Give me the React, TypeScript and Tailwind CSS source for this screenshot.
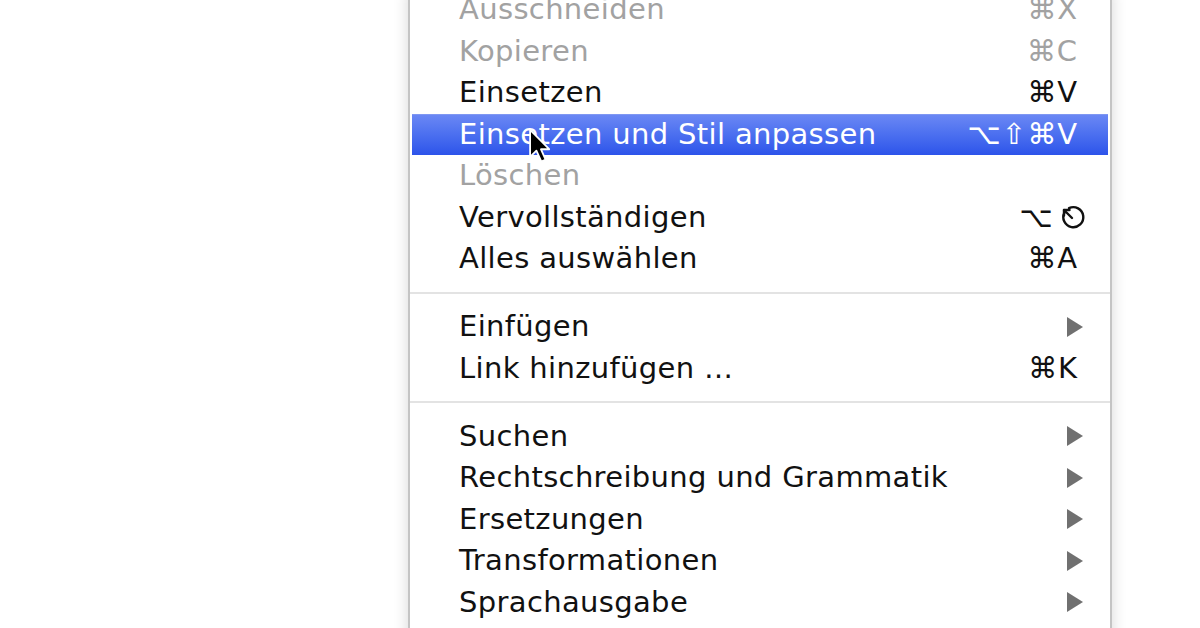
import React from 'react';

type Item = {
  label: string;
  keys?: string;
  esc?: boolean;
  disabled?: boolean;
  submenu?: boolean;
  active?: boolean;
};

// menu sections, split by separators
const sections: Item[][] = [
  [
    { label: 'Ausschneiden', keys: '⌘X', disabled: true },
    { label: 'Kopieren', keys: '⌘C', disabled: true },
    { label: 'Einsetzen', keys: '⌘V' },
    { label: 'Einsetzen und Stil anpassen', keys: '⌥⇧⌘V', active: true },
    { label: 'Löschen', disabled: true },
    { label: 'Vervollständigen', keys: '⌥', esc: true },
    { label: 'Alles auswählen', keys: '⌘A' },
  ],
  [
    { label: 'Einfügen', submenu: true },
    { label: 'Link hinzufügen …', keys: '⌘K' },
  ],
  [
    { label: 'Suchen', submenu: true },
    { label: 'Rechtschreibung und Grammatik', submenu: true },
    { label: 'Ersetzungen', submenu: true },
    { label: 'Transformationen', submenu: true },
    { label: 'Sprachausgabe', submenu: true },
  ],
];

const EscGlyph = () => (
  <svg width="28" height="28" viewBox="0 0 28 28" fill="none" stroke="currentColor" strokeWidth="2.4" strokeLinecap="round">
    <path d="M6.5 9.5 A10 10 0 1 0 11 5.2" />
    <path d="M14 15 L6 7" />
    <path d="M6 7 L6 12.5 M6 7 L11.5 7" />
  </svg>
);

const Arrow = () => (
  <svg width="16" height="20" viewBox="0 0 16 20">
    <polygon points="0,0 16,10 0,20" fill="#707070" />
  </svg>
);

const Cursor = () => (
  <svg width="24" height="36" viewBox="0 0 13 20" className="absolute left-[528px] top-[128px]">
    <path d="M1 1 L1 16 L4.5 12.6 L7.2 18.6 L9.6 17.6 L7 11.8 L11.6 11.8 Z" fill="#000" stroke="#fff" strokeWidth="1" strokeLinejoin="round" />
  </svg>
);

const Row = ({ item }: { item: Item }) => {
  const color = item.active ? 'text-white' : item.disabled ? 'text-[#a2a2a2]' : 'text-[#111111]';
  return (
    <div
      className={`h-[41.5px] flex items-center justify-between pl-[47px] pr-[30px] mx-[2px] ${color} ${
        item.active ? 'bg-linear-to-b from-[#6a87f4] to-[#2d53ea] border-t border-[#7f97f2]' : ''
      }`}
    >
      <span className="whitespace-nowrap tracking-[0.35px]">{item.label}</span>
      <span className="flex items-center gap-[4px] tracking-[1px]">
        {item.keys && <span>{item.keys}</span>}
        {item.esc && (
          <span className="-mr-[8px]">
            <EscGlyph />
          </span>
        )}
        {item.submenu && (
          <span className="-mr-[5px]">
            <Arrow />
          </span>
        )}
      </span>
    </div>
  );
};

export default function App() {
  return (
    <div className="w-[1200px] h-[628px] bg-white overflow-hidden relative font-['DejaVu_Sans',sans-serif] text-[29px] leading-none">
      <div className="ml-[408px] w-[704px] -mt-[11px] bg-white border-x-2 border-[#c4c4c4] shadow-[0_0_14px_rgba(0,0,0,0.16)] pb-[40px]">
        {sections.map((sec, i) => (
          <div key={i}>
            {i > 0 && (
              <div className="h-[26.5px] flex items-center">
                <div className="w-full h-[2px] bg-[#e3e3e3]" />
              </div>
            )}
            {sec.map((item) => (
              <Row key={item.label} item={item} />
            ))}
          </div>
        ))}
      </div>
      <Cursor />
    </div>
  );
}
